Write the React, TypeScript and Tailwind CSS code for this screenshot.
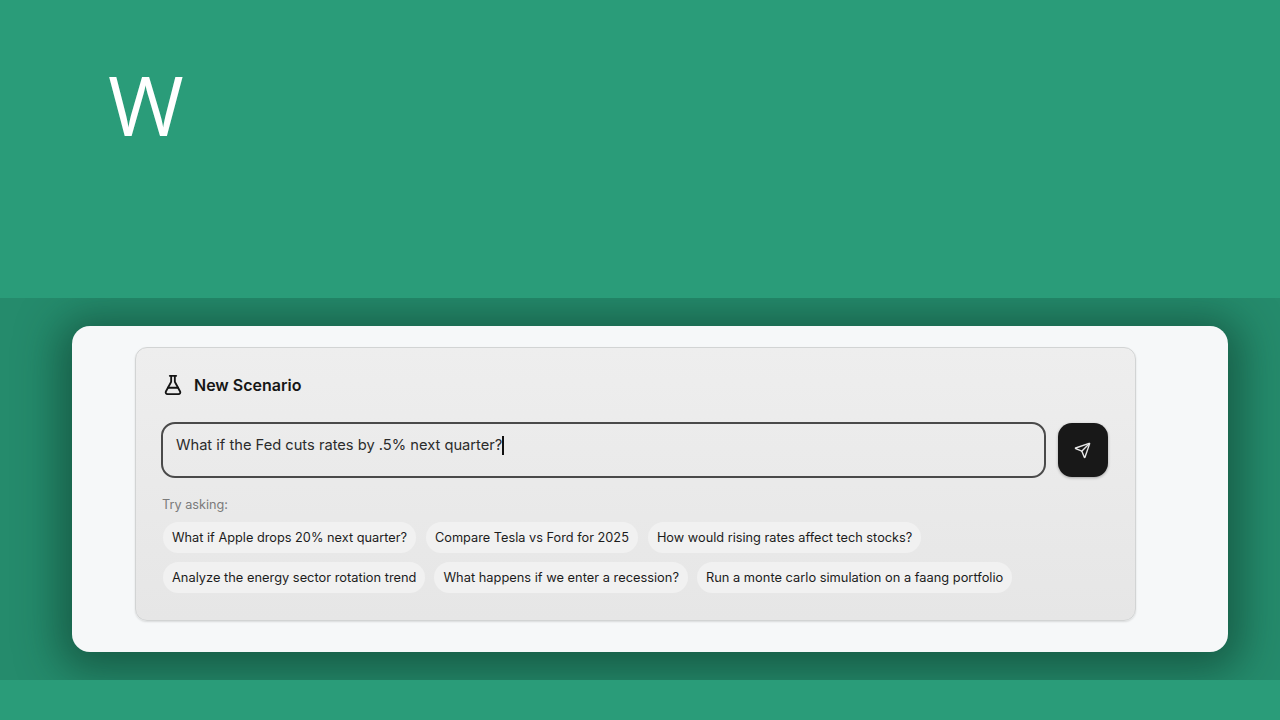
import { FlaskConical, Send } from "lucide-react";

const row1 = [
  "What if Apple drops 20% next quarter?",
  "Compare Tesla vs Ford for 2025",
  "How would rising rates affect tech stocks?",
];
const row2 = [
  "Analyze the energy sector rotation trend",
  "What happens if we enter a recession?",
  "Run a monte carlo simulation on a faang portfolio",
];

function Chip({ label, small }: { label: string; small?: boolean }) {
  return (
    <span className={`h-[31px] flex items-center px-[9px] rounded-full bg-[#f1f1f1] text-[#1c1c1c] whitespace-nowrap ${small ? "text-[12.75px]" : "text-[12.85px]"}`}>
      {label}
    </span>
  );
}

export default function App() {
  return (
    <div className="w-[1280px] h-[720px] overflow-hidden bg-[#2a9c79] flex flex-col font-['Inter','Noto_Sans',sans-serif]">
      <div className="h-[298px] pl-[108px] pt-[49px] shrink-0">
        <div className="text-[82px] leading-[110px] text-white font-['Open_Sans',sans-serif]">W</div>
      </div>
      <div className="h-[382px] shrink-0 overflow-hidden bg-[#258b6c] pl-[72px] pr-[52px] pt-[28px]">
        <div className="h-[326px] rounded-[18px] bg-[#f6f8f9] pl-[63px] pr-[92px] pt-[21px] shadow-[0_6px_40px_14px_rgba(10,50,35,0.5)]">
          <div className="h-[274px] rounded-[12px] border border-[#d2d4d4] bg-gradient-to-b from-[#eeeeee] to-[#e6e6e6] px-[26px] pt-[25px] shadow-[0_1px_2px_rgba(0,0,0,0.12)]">
            <div className="flex items-center gap-[10px] h-[24px]">
              <FlaskConical size={22} strokeWidth={2} className="text-[#151515]" />
              <span className="text-[16px] font-semibold text-[#161616]">New Scenario</span>
            </div>
            <div className="flex gap-[12px] mt-[25px] -ml-[1px] items-center">
              <div className="w-[885px] h-[56px] shrink-0 rounded-[14px] border-2 border-[#4a4a4a] pl-[13px] pt-[9px] text-[14.68px] leading-[24px] text-[#2b2b2b] flex items-start">
                <span>What if the Fed cuts rates by .5% next quarter?</span>
                <span className="w-[1.5px] h-[19px] mt-[3px] bg-[#111111]" />
              </div>
              <button className="w-[50px] h-[54px] shrink-0 rounded-[14px] bg-[#181818] flex items-center justify-center pr-[1px] shadow-[0_1px_3px_rgba(0,0,0,0.3)]">
                <Send size={17} strokeWidth={2} className="text-[#e8e8e8]" />
              </button>
            </div>
            <div className="mt-[18px] text-[12.7px] leading-[18px] text-[#7b7b7b]">Try asking:</div>
            <div className="flex gap-[10px] mt-[8px] ml-[1px]">
              {row1.map((t) => (
                <Chip key={t} label={t} small />
              ))}
            </div>
            <div className="flex gap-[9px] mt-[9px] ml-[1px]">
              {row2.map((t) => (
                <Chip key={t} label={t} />
              ))}
            </div>
          </div>
        </div>
      </div>
    </div>
  );
}
